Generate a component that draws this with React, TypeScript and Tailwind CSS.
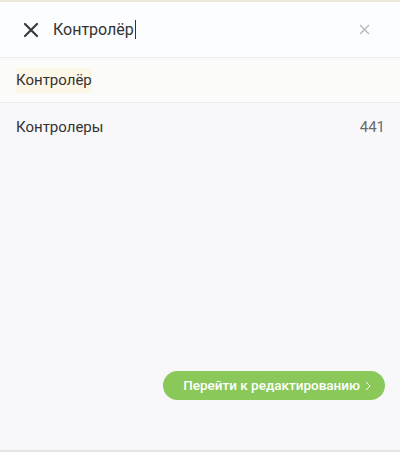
export default function App() {
  return (
    <div className="flex h-[452px] w-[400px] flex-col bg-[#f8f8fa] font-['Roboto',sans-serif]">
      <div className="h-[2px] bg-[#ebe9dd]" />
      <div className="flex h-[56px] items-center border-b border-[#eceef0] bg-[#fcfdfe] pl-[23px] pr-[30px]">
        <svg width="16" height="16" viewBox="0 0 16 16" className="shrink-0">
          <path d="M2 2 L14 14 M14 2 L2 14" stroke="#3a3b40" strokeWidth="2.2" strokeLinecap="round" />
        </svg>
        <div className="ml-[14px] flex flex-1 items-center text-[16px] text-[#333]">
          Контролёр
          <span className="ml-[1px] h-[19px] w-[1.5px] bg-[#333]" />
        </div>
        <svg width="11" height="11" viewBox="0 0 11 11" className="shrink-0">
          <path d="M1 1 L10 10 M10 1 L1 10" stroke="#b4b6ba" strokeWidth="1.3" />
        </svg>
      </div>
      <div className="flex h-[45px] items-center border-b border-[#ebebeb] bg-[#fbfbfa] px-4 pt-[1px]">
        <span className="bg-[#fdf7e8] py-[1px] text-[15px] text-[#333]">Контролёр</span>
      </div>
      <div className="flex h-[47px] items-center justify-between pl-4 pr-[15px] pt-[1px] text-[15px]">
        <span className="text-[#333]">Контролеры</span>
        <span className="text-[#6b6b6b]">441</span>
      </div>
      <div className="flex flex-1 items-end justify-end px-[15px] pb-[50px]">
        <button className="flex h-[29px] items-center gap-[5px] rounded-full bg-[#8bc85a] pl-[20px] pr-[14px] text-[13.5px] font-medium text-white">
          Перейти к редактированию
          <svg width="6" height="10" viewBox="0 0 6 10">
            <path d="M1 1 L5 5 L1 9" fill="none" stroke="#fff" strokeWidth="1" />
          </svg>
        </button>
      </div>
      <div className="h-[2px] bg-[#e4e4e6]" />
    </div>
  );
}
